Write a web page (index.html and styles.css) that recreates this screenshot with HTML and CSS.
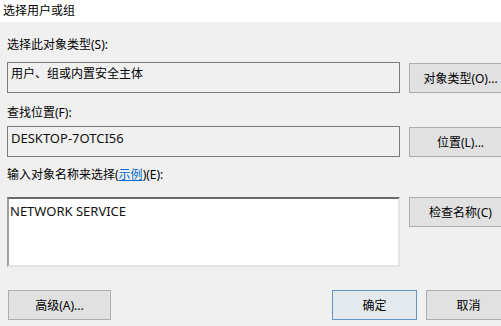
FILE: index.html
```html
<!DOCTYPE html>
<html>
<head>
<meta charset="utf-8">
<link rel="stylesheet" href="styles.css">
</head>
<body>
<div class="dialog">
  <div class="titlebar">选择用户或组</div>
  <div class="content">
    <div class="label l1">选择此对象类型(S):</div>
    <div class="row r1">
      <div class="field">用户、组或内置安全主体</div>
      <div class="btn side">对象类型(O)...</div>
    </div>
    <div class="label l2">查找位置(F):</div>
    <div class="row r2">
      <div class="field latin">DESKTOP-7OTCI56</div>
      <div class="btn side">位置(L)...</div>
    </div>
    <div class="label l3">输入对象名称来选择(<span class="link">示例</span>)(E):</div>
    <div class="row r3">
      <div class="textarea latin">NETWORK SERVICE</div>
      <div class="btn side">检查名称(C)</div>
    </div>
    <div class="bottom">
      <div class="btn adv">高级(A)...</div>
      <div class="spacer"></div>
      <div class="btn ok">确定</div>
      <div class="btn cancel">取消</div>
    </div>
  </div>
</div>
</body>
</html>
```

FILE: styles.css
```css
html, body {
  margin: 0;
  padding: 0;
  overflow: hidden;
  background: #f0f0f0;
}
body {
  width: 501px;
  height: 326px;
  font-family: "Noto Sans", "Noto Sans CJK SC", sans-serif;
  font-size: 12px;
  color: #000;
}
.dialog {
  width: 520px;
}
.titlebar {
  height: 22px;
  background: #fff;
  line-height: 22px;
  padding-left: 3px;
  box-sizing: border-box;
}
.content {
  padding-left: 7px;
}
.label {
  line-height: 16px;
  height: 16px;
}
.l1 { margin-top: 15px; }
.l2 { margin-top: 12px; }
.l3 { margin-top: 10px; }
.row {
  display: flex;
  align-items: flex-start;
  gap: 9px;
}
.r1 { margin-top: 9px; }
.r2 { margin-top: 5px; }
.r3 { margin-top: 14px; }
.field {
  width: 393px;
  height: 31px;
  box-sizing: border-box;
  border: 1px solid #7a7a7a;
  padding: 3px 0 0 3px;
  line-height: 16px;
}
.latin {
  font-size: 13px;
  color: #111;
}
.textarea {
  width: 393px;
  height: 70px;
  box-sizing: border-box;
  background: #fff;
  border-top: 2px solid #696969;
  border-left: 2px solid #a0a0a0;
  border-right: 2px solid #e3e3e3;
  border-bottom: 2px solid #e3e3e3;
  padding: 4px 0 0 1px;
  line-height: 16px;
}
.btn {
  box-sizing: border-box;
  background: #e1e1e1;
  border: 1px solid #adadad;
  display: flex;
  align-items: center;
  justify-content: center;
  height: 30px;
}
.side {
  width: 103px;
}
.r1 .side, .r2 .side { margin-top: 1px; }
.bottom {
  display: flex;
  margin-top: 23px;
  padding-left: 1px;
  gap: 9px;
}
.adv { width: 103px; height: 30px; }
.spacer { width: 203px; }
.ok {
  width: 85px;
  height: 30px;
  background: #e4e9ee;
  border-color: #5f95c8;
}
.cancel { width: 85px; height: 30px; }
.link {
  color: #0066cc;
  text-decoration: underline;
}
```
